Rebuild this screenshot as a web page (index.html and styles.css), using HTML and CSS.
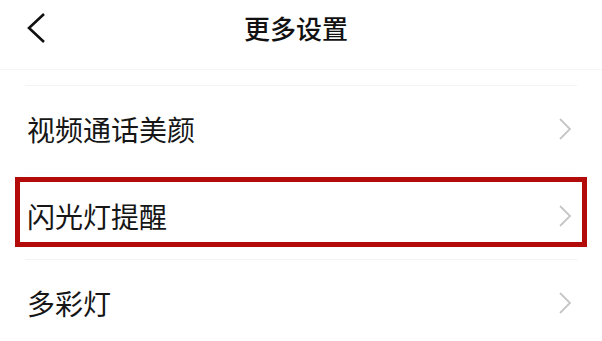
FILE: index.html
```html
<!DOCTYPE html>
<html lang="zh-CN">
<head>
    <meta charset="UTF-8">
    <meta name="viewport" content="width=device-width, initial-scale=1.0">
    <title>更多设置</title>
    <link rel="stylesheet" href="styles.css">
</head>
<body>
    <header class="top-bar">
        <div class="back">
            <svg width="20" height="32" viewBox="0 0 20 32">
                <polyline points="17,2 2,16 17,30" fill="none" stroke="#111" stroke-width="2.6" stroke-linejoin="miter"/>
            </svg>
        </div>
        <div class="title">更多设置</div>
        <div></div>
    </header>
    <div class="list">
        <div class="row">
            <span>视频通话美颜</span>
            <svg class="arrow" width="14" height="24" viewBox="0 0 14 24">
                <polyline points="2,2 12,12 2,22" fill="none" stroke="#c6c6c6" stroke-width="1.8"/>
            </svg>
        </div>
        <div class="row row-marked">
            <span>闪光灯提醒</span>
            <svg class="arrow" width="14" height="24" viewBox="0 0 14 24">
                <polyline points="2,2 12,12 2,22" fill="none" stroke="#c6c6c6" stroke-width="1.8"/>
            </svg>
            <div class="highlight"></div>
        </div>
        <div class="row">
            <span>多彩灯</span>
            <svg class="arrow" width="14" height="24" viewBox="0 0 14 24">
                <polyline points="2,2 12,12 2,22" fill="none" stroke="#c6c6c6" stroke-width="1.8"/>
            </svg>
        </div>
    </div>
</body>
</html>
```

FILE: styles.css
```css
body {
    margin: 0;
    padding: 0;
    background-color: #fff;
    font-family: "Noto Sans CJK SC", "Noto Sans", sans-serif;
    color: #161616;
    overflow: hidden;
}
/* Верхняя панель */
.top-bar {
    height: 70px;
    box-sizing: border-box;
    padding: 0 37px 14px 27px;
    display: grid;
    grid-template-columns: 1fr auto 1fr;
    align-items: center;
    border-bottom: 1px solid #f5f5f5;
}
.back {
    display: flex;
    align-items: center;
}
.title {
    font-size: 26px;
    font-weight: 500;
    line-height: 1;
    color: #111;
}
/* Список настроек */
.list {
    margin: 15px 25px 0 25px;
}
.row {
    position: relative;
    height: 87px;
    box-sizing: border-box;
    border-top: 1px solid #f3f3f3;
    padding: 0 5px 0 2px;
    display: flex;
    align-items: center;
    justify-content: space-between;
    font-size: 28px;
}
.row-marked {
    border-top-color: #fbfbfb;
}
.arrow {
    display: block;
}
/* Красная рамка выделения */
.highlight {
    position: absolute;
    top: 4px;
    left: -10px;
    right: -10px;
    height: 70px;
    box-sizing: border-box;
    border: 5px solid #b30a0a;
}
```
